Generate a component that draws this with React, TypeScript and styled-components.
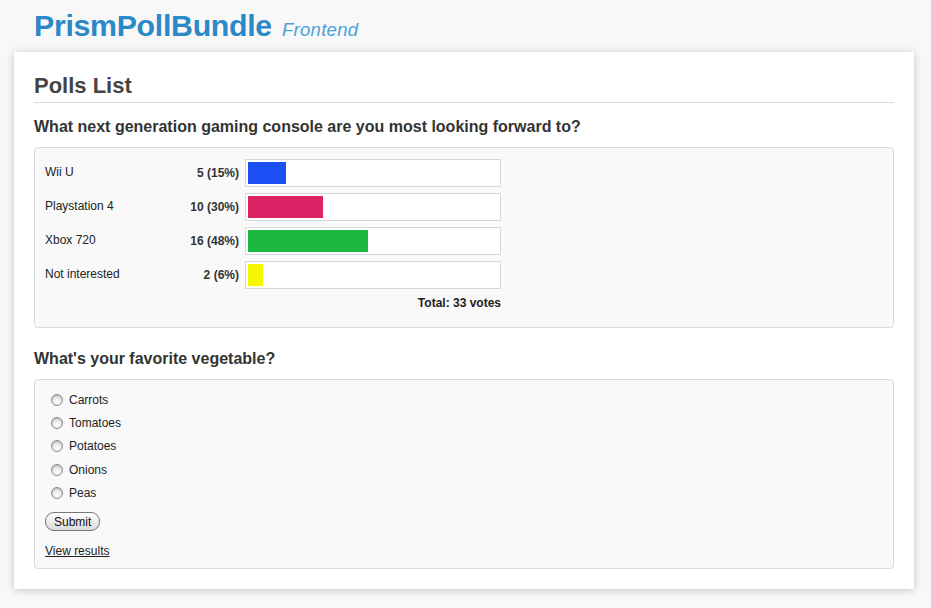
import styled, { createGlobalStyle } from "styled-components";

const GlobalStyle = createGlobalStyle`
  html, body {
    margin: 0;
    padding: 0;
    background: #f8f8f8;
    font-family: "Liberation Sans", Arial, Helvetica, sans-serif;
    color: #333;
  }
`;

const Page = styled.div`
  width: 931px;
  height: 608px;
  overflow: hidden;
  padding: 0 17px 0 14px;
  box-sizing: border-box;
`;

const Header = styled.header`
  display: flex;
  align-items: baseline;
  gap: 10px;
  padding: 9px 0 0 20px;
  height: 52px;
  box-sizing: border-box;
`;

const Brand = styled.h1`
  margin: 0;
  font-size: 30.3px;
  font-weight: bold;
  color: #2a89c6;
  letter-spacing: -0.3px;
`;

const SubBrand = styled.span`
  font-size: 18.5px;
  font-style: italic;
  color: #4aa3dc;
  letter-spacing: 0.3px;
`;

const Card = styled.main`
  background: #fff;
  padding: 20px 20px 20px;
  box-shadow: 0 1px 8px rgba(0, 0, 0, 0.22);
  box-sizing: border-box;
  height: 537px;
`;

const Title = styled.h2`
  margin: 0;
  font-size: 22px;
  font-weight: bold;
  color: #444;
  line-height: 27px;
  padding-bottom: 3px;
  border-bottom: 1px solid #ddd;
`;

const Question = styled.h3<{ $gap: number }>`
  margin: ${(p) => p.$gap}px 0 10px;
  font-size: 16px;
  line-height: 20px;
  font-weight: bold;
  color: #333;
`;

const PollBox = styled.section<{ $pad: string }>`
  background: #f9f9f9;
  border: 1px solid #dadada;
  border-radius: 4px;
  padding: ${(p) => p.$pad};
`;

const ResultRow = styled.div`
  display: grid;
  grid-template-columns: 100px 88px 256px;
  column-gap: 6px;
  align-items: center;
  margin-bottom: 6px;
  font-size: 12px;
`;

const Label = styled.span`
  color: #222;
  margin-top: -3px;
`;

const Count = styled.span`
  text-align: right;
  font-weight: bold;
  color: #333;
`;

const BarTrack = styled.div`
  height: 22px;
  padding: 2px;
  background: #fff;
  border: 1px solid #d8d8d8;
`;

const BarFill = styled.div<{ $color: string }>`
  height: 100%;
  background: ${(p) => p.$color};
`;

const Total = styled.div`
  width: 456px;
  text-align: right;
  font-size: 12px;
  font-weight: bold;
  color: #222;
  margin: 7px 0 7px;
`;

const VoteForm = styled.form`
  display: flex;
  flex-direction: column;
  align-items: flex-start;
`;

const Choice = styled.label`
  display: flex;
  align-items: center;
  gap: 6px;
  height: 23.3px;
  padding-left: 6px;
  font-size: 12px;
  color: #222;
`;

const Radio = styled.input`
  appearance: none;
  margin: 0;
  width: 12px;
  height: 12px;
  border-radius: 50%;
  border: 1px solid #8a8a8a;
  background: radial-gradient(circle at 50% 70%, #fff 0%, #eee 40%, #c8c8c8 100%);
  box-shadow: inset 0 1px 1px rgba(0, 0, 0, 0.15);
`;

const SubmitButton = styled.button`
  margin: 8px 0 0;
  height: 19px;
  padding: 0 8px;
  font-family: "Liberation Sans", Arial, sans-serif;
  font-size: 12px;
  color: #111;
  border: 1px solid #777;
  border-radius: 9px;
  background: linear-gradient(#fff, #e8e8e8 60%, #dcdcdc);
  line-height: 16px;
`;

const ResultsLink = styled.a`
  margin-top: 13px;
  font-size: 12px;
  color: #222;
  text-decoration: underline;
`;

const results = [
  { label: "Wii U", votes: 5, pct: 15, color: "#1b4ef3" },
  { label: "Playstation 4", votes: 10, pct: 30, color: "#db2366" },
  { label: "Xbox 720", votes: 16, pct: 48, color: "#1bb93f" },
  { label: "Not interested", votes: 2, pct: 6, color: "#f6f700" },
];

const vegetables = ["Carrots", "Tomatoes", "Potatoes", "Onions", "Peas"];

export default function App() {
  return (
    <>
      <GlobalStyle />
      <Page>
        <Header>
          <Brand>PrismPollBundle</Brand>
          <SubBrand>Frontend</SubBrand>
        </Header>
        <Card>
          <Title>Polls List</Title>

          <Question $gap={14}>What next generation gaming console are you most looking forward to?</Question>
          <PollBox $pad="11px 10px 10px">
            {results.map((r) => (
              <ResultRow key={r.label}>
                <Label>{r.label}</Label>
                <Count>
                  {r.votes} ({r.pct}%)
                </Count>
                <BarTrack>
                  <BarFill $color={r.color} style={{ width: `${r.pct}%` }} />
                </BarTrack>
              </ResultRow>
            ))}
            <Total>Total: 33 votes</Total>
          </PollBox>

          <Question $gap={21}>What's your favorite vegetable?</Question>
          <PollBox $pad="8px 10px 10px">
            <VoteForm onSubmit={(e) => e.preventDefault()}>
              {vegetables.map((v) => (
                <Choice key={v}>
                  <Radio type="radio" name="vegetable" value={v} />
                  {v}
                </Choice>
              ))}
              <SubmitButton type="submit">Submit</SubmitButton>
              <ResultsLink href="#">View results</ResultsLink>
            </VoteForm>
          </PollBox>
        </Card>
      </Page>
    </>
  );
}
